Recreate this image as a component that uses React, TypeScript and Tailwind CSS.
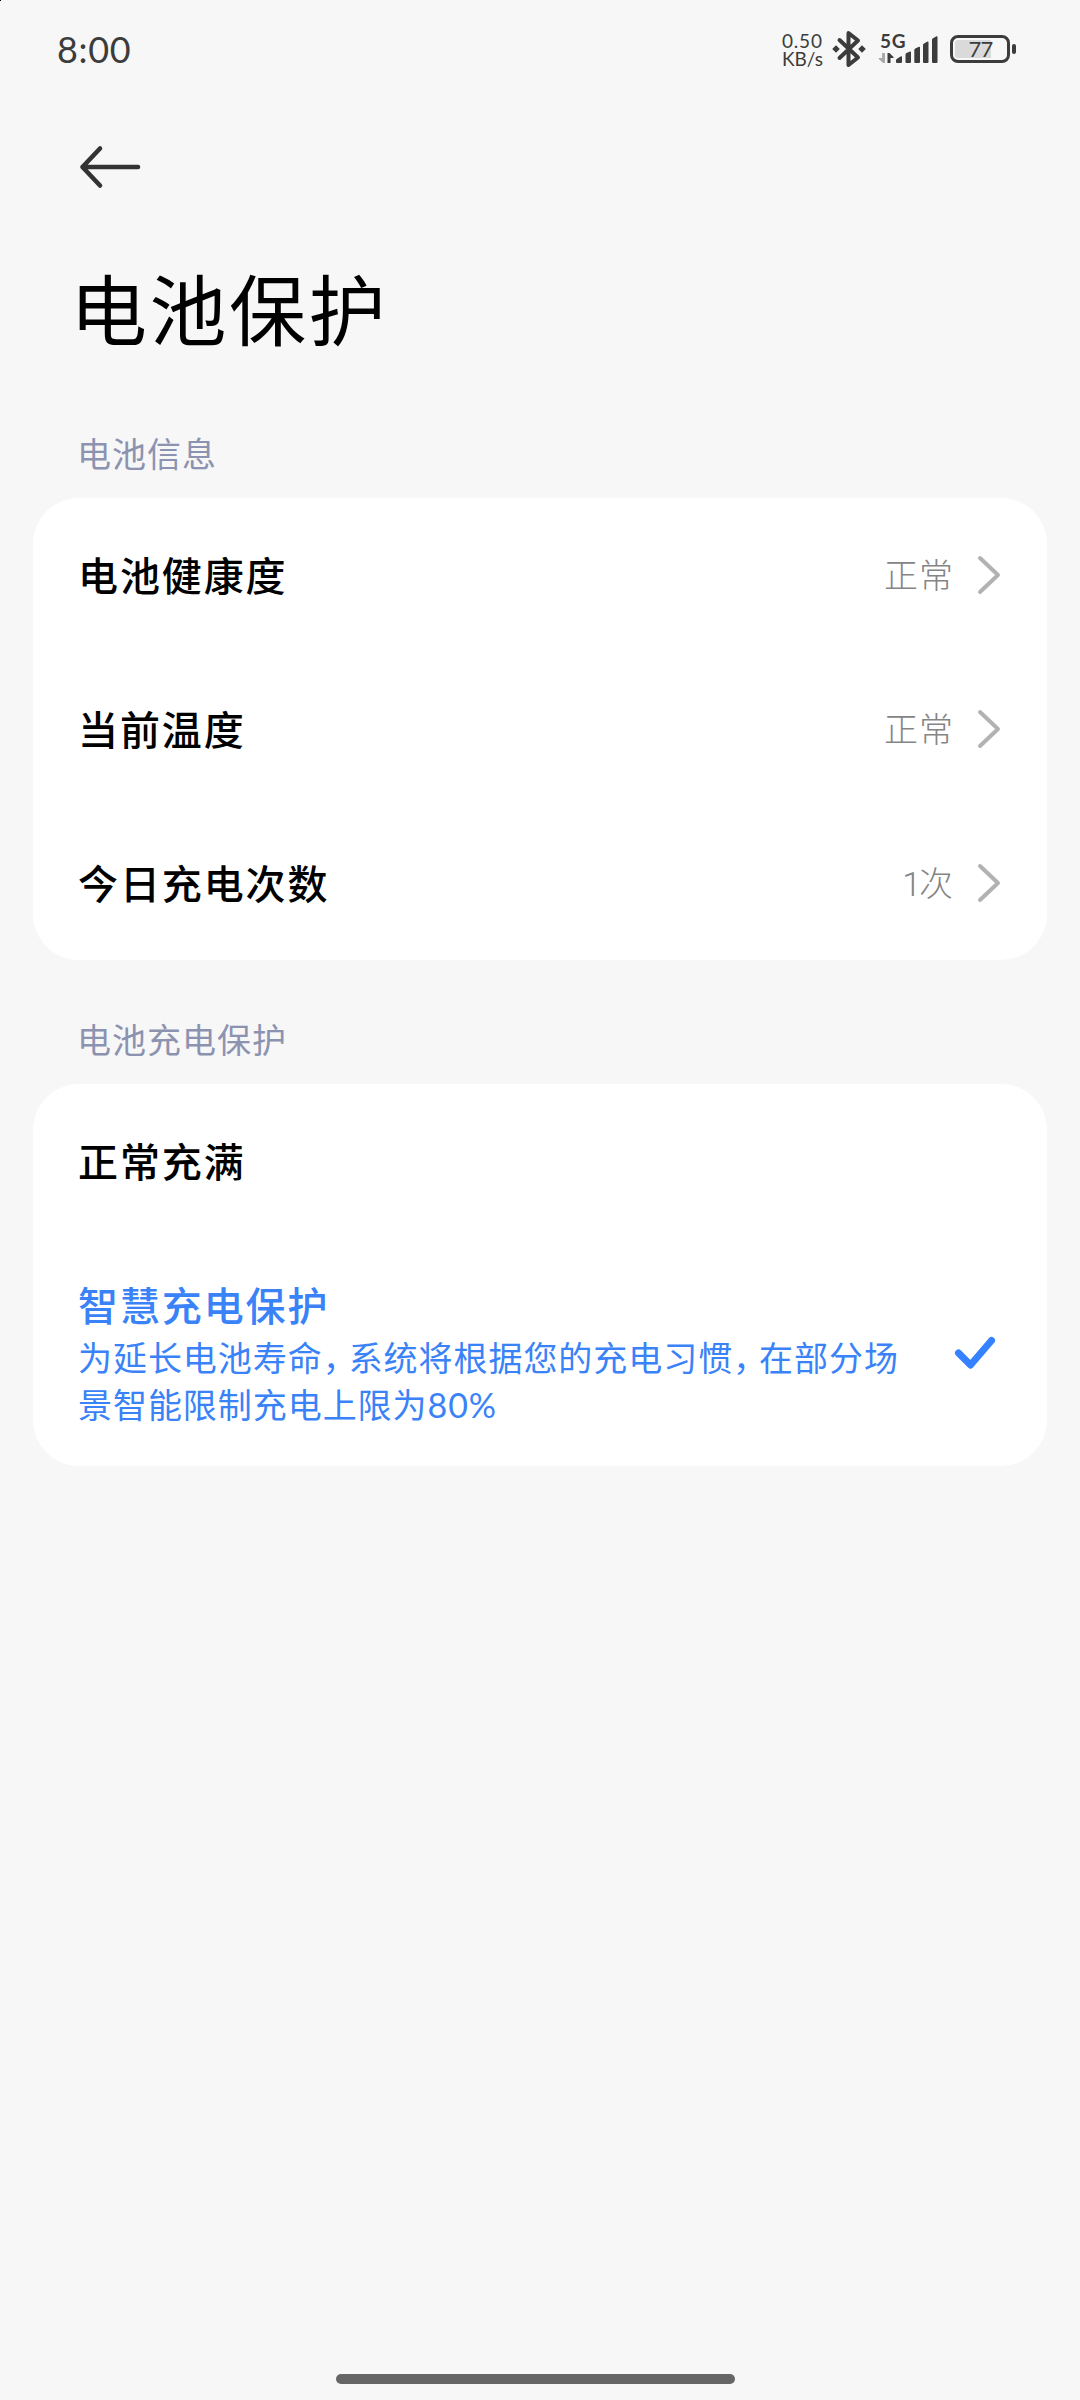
import React from 'react'

const infoRows = [
  { title: '电池健康度', value: '正常' },
  { title: '当前温度', value: '正常' },
  { title: '今日充电次数', count: 1, value: '次' },
]

function StatusBar() {
  return (
    <div className="flex h-[100px] items-start justify-between pl-[57px] pr-[64px]">
      <div className="mt-[27px] text-[36px] leading-[44px] tracking-[0.7px] text-[#3c3c3c]">8:00</div>
      <div className="flex items-start text-[#3c3c3c]">
        <div className="mt-[32px] mr-[9px] w-[41px] text-[19px] leading-[18px]">
          <div className="tracking-[0.8px]">0.50</div>
          <div>KB/s</div>
        </div>
        {/* Bluetooth, connected */}
        <svg className="mt-[30px] h-[38px] w-[34px]" viewBox="0 0 34 38" fill="none">
          <path d="M7.5 10 26 27.5 16.5 35V3L26 10.5 7.5 28" stroke="#3c3c3c" strokeWidth="4" strokeLinecap="round" strokeLinejoin="round" />
          <path d="M4 15.2 7.8 19 4 22.8.2 19zM30 15.2 33.800 19 30 22.800 26.200 19z" fill="#3c3c3c" />
        </svg>
        {/* Network type over signal bars */}
        <div className="relative ml-[12px] mt-[32px] h-[34px] w-[60px]">
          <div className="absolute left-[2px] top-0 text-[19px] font-bold leading-[18px] tracking-[0.8px]">5G</div>
          <svg className="h-[34px] w-[60px]" viewBox="0 0 60 34" fill="#3c3c3c">
            <path d="M4 21h3v10H5L.8 27q-.6-1 .5-1H4z" fill="#aaa" />
            <path d="M9.500 21h2l4 4q.6 1-.5 1h-2.500v5h-3z" />
            <path d="M18 28.500q0-1 1-1.700l4-2.500q1-.5 1 .7v5q0 1-1 1h-4q-1 0-1-1zM27.500 22.500q0-1 1-1.500l3.500-1.500q1-.3 1 .7V30q0 1-1 1h-3.500q-1 0-1-1zM36.300 18q0-1 1-1.500l3.700-1.700q1-.3 1 .7V30q0 1-1 1h-3.700q-1 0-1-1zM45 13q0-1 1-1.500l3.500-2q1-.3 1 .7V30q0 1-1 1H46q-1 0-1-1zM54 7.800q0-1 1-1.500l3.500-2q1-.3 1 .7V30q0 1-1 1H55q-1 0-1-1z" />
          </svg>
        </div>
        {/* Battery */}
        <div className="ml-[12px] mt-[35px] flex items-center">
          <div className="relative flex h-[28px] w-[60px] rounded-[8px] border-[3px] border-[#3c3c3c] p-[2px]">
            <div className="h-full w-[36px] rounded-l-[3px] bg-[#dadada]" />
            <div className="absolute inset-0 flex items-center justify-center pl-px text-[22px] leading-[22px] tracking-[-0.8px]">77</div>
          </div>
          <div className="ml-[2px] h-[10px] w-[4px] rounded-[2px] bg-[#3c3c3c]" />
        </div>
      </div>
    </div>
  )
}

function Chevron() {
  return (
    <svg className="ml-[23px] h-[40px] w-[24px]" viewBox="0 0 24 40" fill="none">
      <path d="M3 3 21 20 3 37" stroke="#b2b2b2" strokeWidth="4" strokeLinecap="round" strokeLinejoin="round" />
    </svg>
  )
}

function SectionTitle({ children }: { children: React.ReactNode }) {
  return <div className="pl-[77px] text-[34px] leading-[48px] tracking-[1px] text-[#8c93b0]">{children}</div>
}

// Full-width comma, set narrower than a whole character cell
function Comma() {
  return <span className="tracking-[9px] [font-feature-settings:'halt']">，</span>
}

export default function App() {
  return (
    <div className="relative flex h-[2400px] w-[1080px] flex-col overflow-hidden bg-[#f7f7f7] font-[Lato,'Noto_Sans_CJK_SC',sans-serif] text-black">
      <div className="absolute left-0 top-0 h-px w-px bg-black" />
      <StatusBar />

      <button className="ml-[77px] mt-[44px] h-[46px] w-[66px]">
        <svg className="h-[46px] w-[66px]" viewBox="0 0 66 46" fill="none">
          <path d="M23 4.500 5.500 23 23 41.500M5.500 23H61" stroke="#333" strokeWidth="4.600" strokeLinecap="round" strokeLinejoin="round" />
        </svg>
      </button>

      <h1 className="ml-[70px] mt-[65px] text-[77px] font-normal leading-[110px] tracking-[2.5px]">电池保护</h1>

      <div className="mt-[65px]">
        <SectionTitle>电池信息</SectionTitle>
      </div>
      <div className="mx-[33px] mt-[20px] rounded-[46px] bg-white">
        {infoRows.map((row) => (
          <div key={row.title} className="flex h-[154px] items-center pl-[45px] pr-[46px]">
            <div className="flex-1 pt-[2px] text-[40px] font-medium leading-[60px] tracking-[1.9px]">{row.title}</div>
            <div className="text-[34px] font-light leading-[48px] tracking-[1px] text-[#858585]">
              {row.count && <span className="font-[Roboto,sans-serif] tracking-[-2px]">{row.count}</span>}
              {row.value}
            </div>
            <Chevron />
          </div>
        ))}
      </div>

      <div className="mt-[56px]">
        <SectionTitle>电池充电保护</SectionTitle>
      </div>
      <div className="mx-[33px] mt-[20px] h-[382px] rounded-[46px] bg-white">
        <div className="flex h-[154px] items-center pl-[45px] pt-[2px] text-[40px] font-medium leading-[60px] tracking-[1.9px]">
          正常充满
        </div>
        <div className="flex items-center pl-[45px] pr-[51px] text-[#3a82f7]">
          <div className="w-[830px] pt-[38px]">
            <div className="text-[40px] font-medium leading-[60px] tracking-[1.9px]">智慧充电保护</div>
            <div className="-mt-[2px] text-[34px] leading-[47px] tracking-[0.95px]">
              为延长电池寿命<Comma />系统将根据您的充电习惯<Comma />在部分场景智能限制充电上限为80%
            </div>
          </div>
          <svg className="ml-auto mt-[42px] h-[36px] w-[42px]" viewBox="0 0 42 36" fill="none">
            <path d="M4.500 17 16.500 29 37.500 4.500" stroke="#3482ff" strokeWidth="7" strokeLinecap="round" strokeLinejoin="round" />
          </svg>
        </div>
      </div>

      <div className="ml-[336px] mt-auto mb-[16px] h-[10px] w-[399px] rounded-full bg-[#666]" />
    </div>
  )
}
